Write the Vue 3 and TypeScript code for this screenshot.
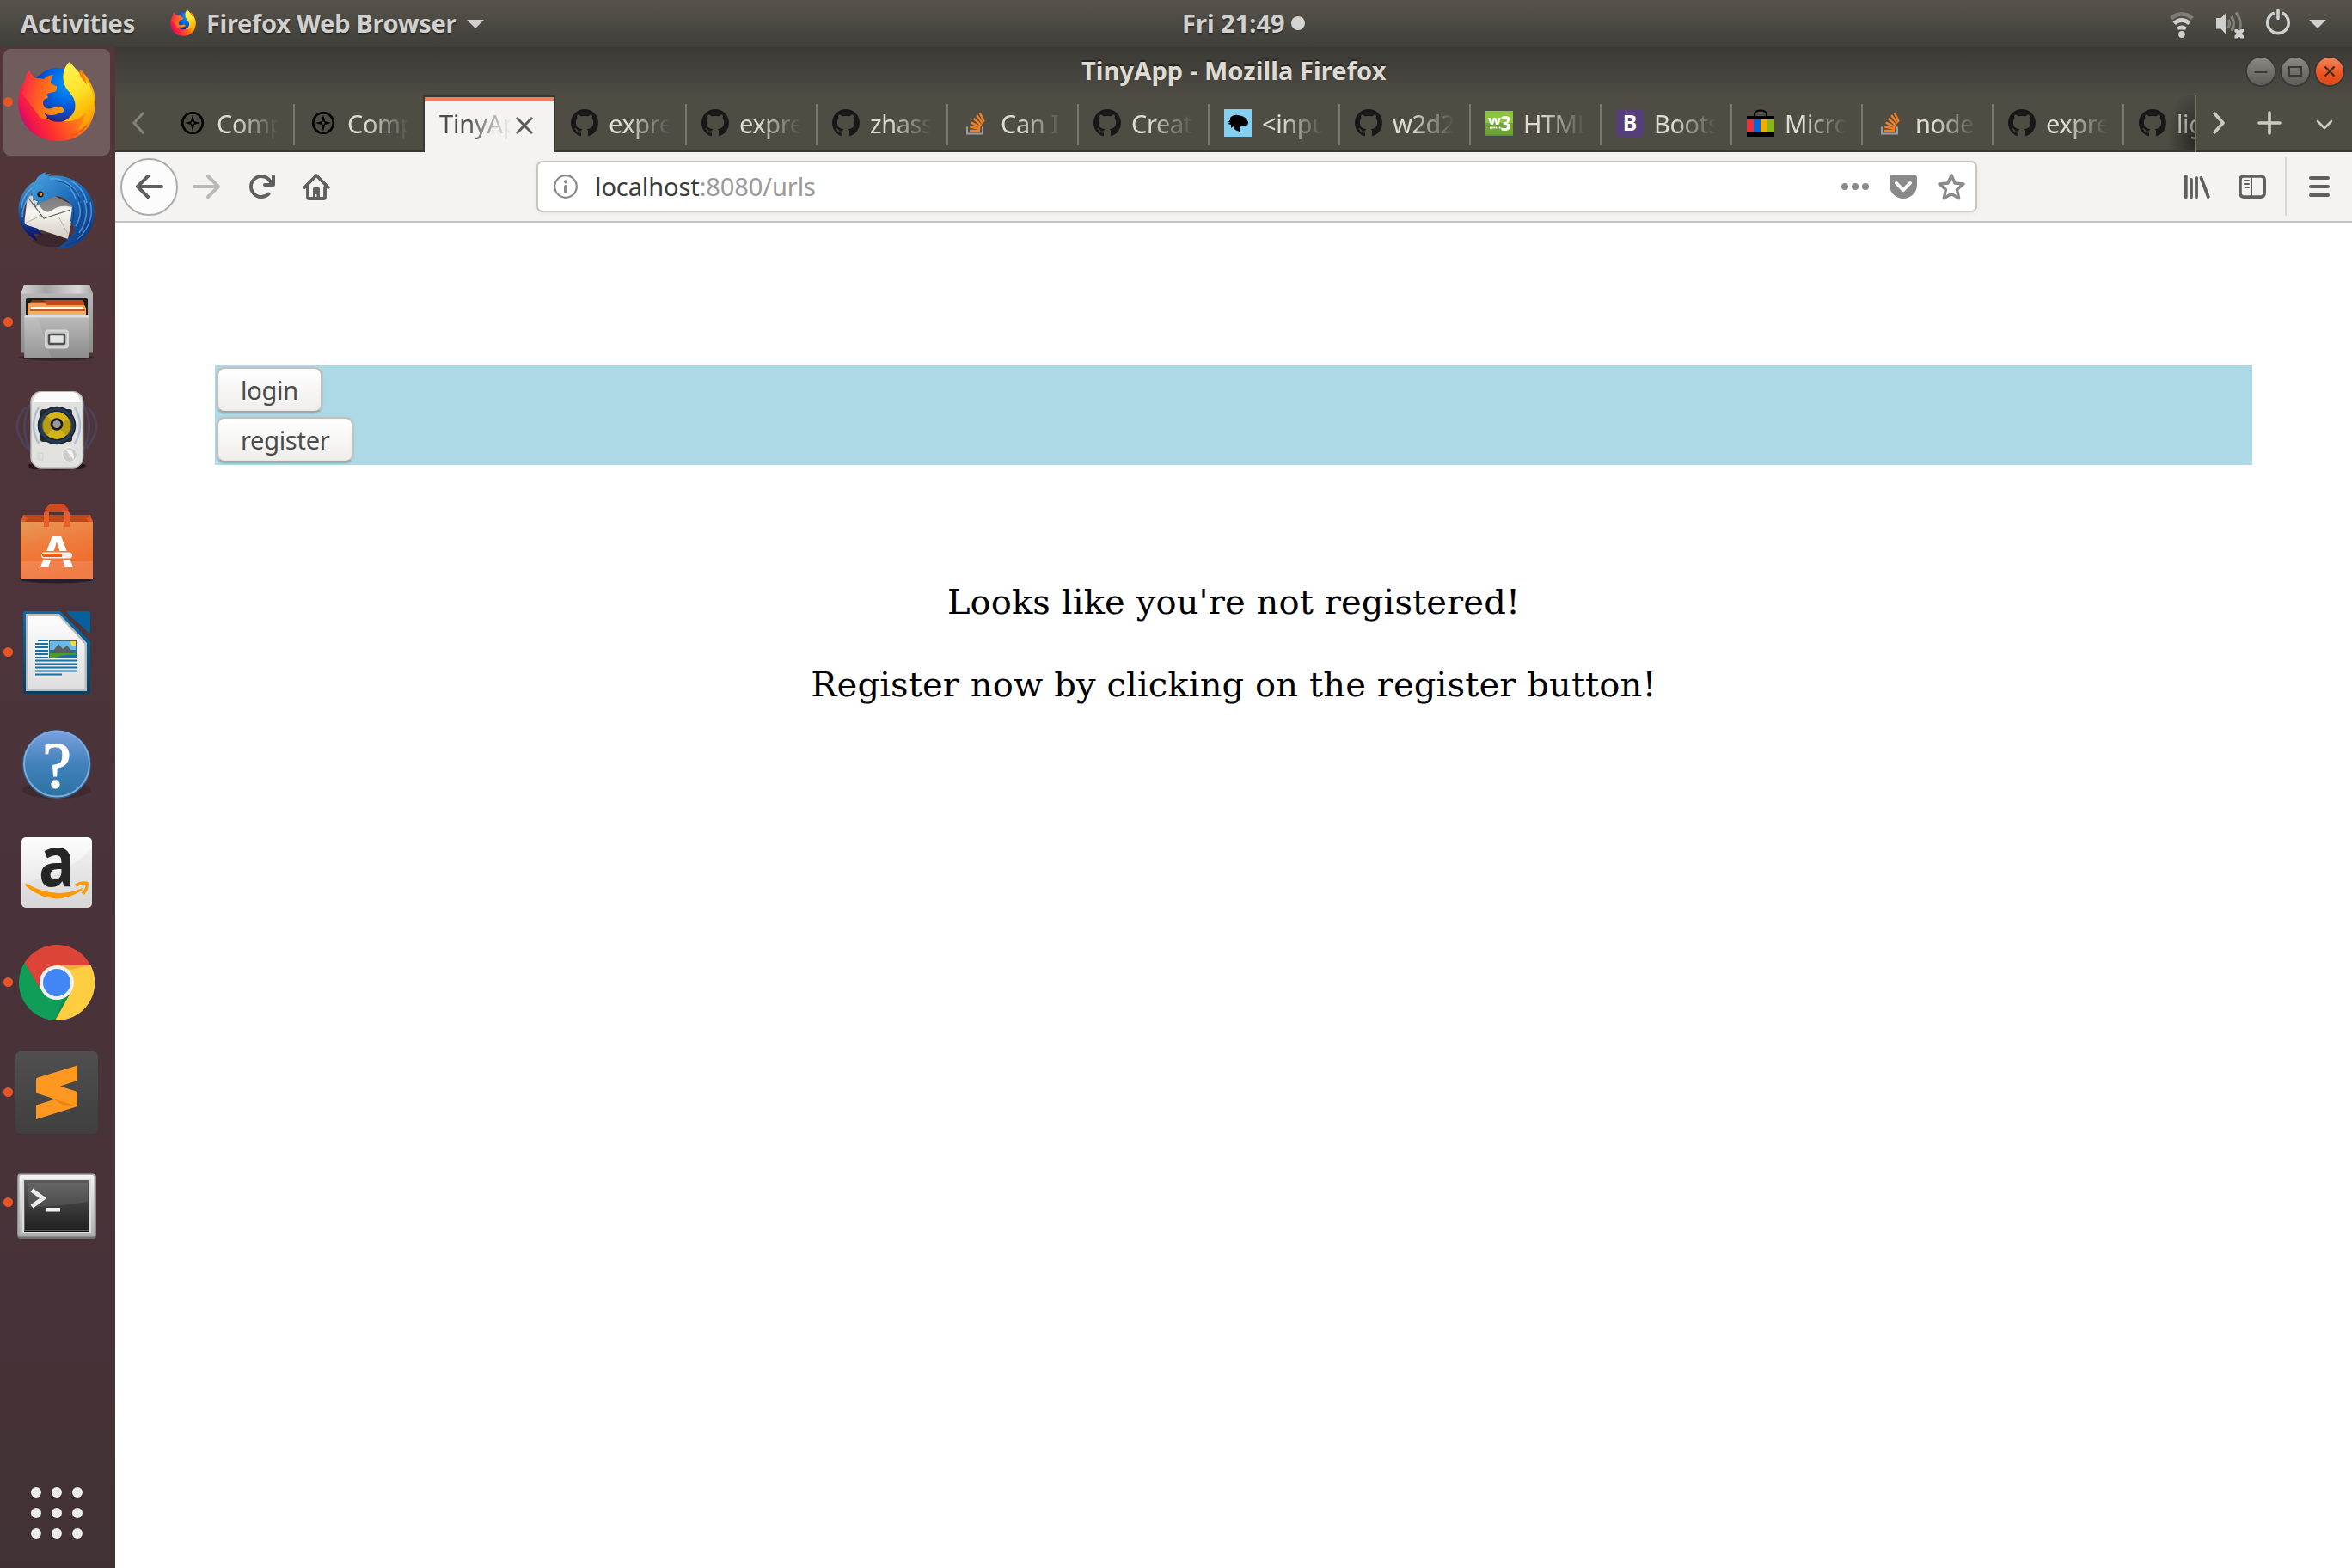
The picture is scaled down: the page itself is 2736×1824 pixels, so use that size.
<script setup lang="ts">
interface Tab {
  icon: string
  title: string
  selected?: boolean
}

interface Launcher {
  id: string
  running?: boolean
  focused?: boolean
}

const launchers: Launcher[] = [
  { id: 'firefox', running: true, focused: true },
  { id: 'thunderbird' },
  { id: 'files', running: true },
  { id: 'rhythmbox' },
  { id: 'software' },
  { id: 'writer', running: true },
  { id: 'help' },
  { id: 'amazon' },
  { id: 'chrome', running: true },
  { id: 'sublime', running: true },
  { id: 'terminal', running: true },
]

const tabs: Tab[] = [
  { icon: 'compass', title: 'Comp' },
  { icon: 'compass', title: 'Comp' },
  { icon: '', title: 'TinyAp', selected: true },
  { icon: 'github', title: 'expre' },
  { icon: 'github', title: 'expre' },
  { icon: 'github', title: 'zhass' },
  { icon: 'stack', title: 'Can I' },
  { icon: 'github', title: 'Creat' },
  { icon: 'mdn', title: '<inpu' },
  { icon: 'github', title: 'w2d2' },
  { icon: 'w3', title: 'HTML' },
  { icon: 'bootstrap', title: 'Boots' },
  { icon: 'bag', title: 'Micro' },
  { icon: 'stack', title: 'node' },
  { icon: 'github', title: 'expre' },
  { icon: 'github', title: 'lig' },
]
</script>

<template>
  <div class="screen">
    <svg class="defs" width="0" height="0">
      <defs>
        <linearGradient id="fxBody" x1="0" y1=".75" x2="1" y2=".25">
          <stop offset="0" stop-color="#b0087e" /><stop offset=".13" stop-color="#ee1450" /><stop offset=".3" stop-color="#ff302f" />
          <stop offset=".55" stop-color="#ff6a1c" /><stop offset=".8" stop-color="#ff9c0c" /><stop offset="1" stop-color="#ffb405" />
        </linearGradient>
        <linearGradient id="fxHead" x1="0" y1=".2" x2="1" y2=".5">
          <stop offset="0" stop-color="#f9244a" /><stop offset=".4" stop-color="#ff5a24" /><stop offset="1" stop-color="#ff9a08" />
        </linearGradient>
        <radialGradient id="fxGlobe" cx=".68" cy=".3" r=".75">
          <stop offset="0" stop-color="#0a96fb" /><stop offset=".5" stop-color="#0060df" /><stop offset=".8" stop-color="#1b3ca6" /><stop offset="1" stop-color="#3b1466" />
        </radialGradient>
        <linearGradient id="fxFlame" x1=".3" y1="0" x2=".6" y2="1">
          <stop offset="0" stop-color="#fff44f" /><stop offset=".45" stop-color="#ffe22b" /><stop offset=".75" stop-color="#ffbd0a" /><stop offset="1" stop-color="#ff9a05" />
        </linearGradient>
        <linearGradient id="tbWing" x1="0" y1="0" x2="1" y2="1">
          <stop offset="0" stop-color="#4ba4de" /><stop offset=".45" stop-color="#1f6fbd" /><stop offset="1" stop-color="#0b2a77" />
        </linearGradient>
        <linearGradient id="tbLow" x1="0" y1="0" x2="0" y2="1">
          <stop offset="0" stop-color="#4a94d0" /><stop offset=".55" stop-color="#1c55a0" /><stop offset="1" stop-color="#0a0a5e" />
        </linearGradient>
        <linearGradient id="paper" x1="0" y1="0" x2="0" y2="1">
          <stop offset="0" stop-color="#c9c7c0" /><stop offset=".4" stop-color="#f8f6f2" /><stop offset="1" stop-color="#d3cdc2" />
        </linearGradient>
        <linearGradient id="metal" x1="0" y1="0" x2="0" y2="1">
          <stop offset="0" stop-color="#bdbdbd" /><stop offset="1" stop-color="#8b8b8b" />
        </linearGradient>
        <linearGradient id="metalTop" x1="0" y1="0" x2="1" y2="0">
          <stop offset="0" stop-color="#d4d2d2" /><stop offset=".35" stop-color="#a5a3a3" /><stop offset=".8" stop-color="#dad8d8" /><stop offset="1" stop-color="#a9a7a7" />
        </linearGradient>
        <linearGradient id="white" x1="0" y1="0" x2="0" y2="1">
          <stop offset="0" stop-color="#fdfdfd" /><stop offset="1" stop-color="#dedede" />
        </linearGradient>
        <linearGradient id="orangeBag" x1="0" y1="0" x2=".3" y2="1">
          <stop offset="0" stop-color="#e69a58" /><stop offset=".45" stop-color="#ef7d3e" /><stop offset="1" stop-color="#ee6a2b" />
        </linearGradient>
        <linearGradient id="helpBlue" x1="0" y1="0" x2="0" y2="1">
          <stop offset="0" stop-color="#7b9fdf" /><stop offset=".5" stop-color="#4282bb" /><stop offset="1" stop-color="#2b72a2" />
        </linearGradient>
        <linearGradient id="sublimeBg" x1="0" y1="0" x2="0" y2="1">
          <stop offset="0" stop-color="#4f4f4f" /><stop offset="1" stop-color="#3e3f3e" />
        </linearGradient>
        <linearGradient id="term" x1="0" y1="0" x2="0" y2="1">
          <stop offset="0" stop-color="#5a5a5a" /><stop offset=".5" stop-color="#3c3c3c" /><stop offset="1" stop-color="#1f1f1f" />
        </linearGradient>
        <linearGradient id="termFrame" x1="0" y1="0" x2="0" y2="1">
          <stop offset="0" stop-color="#f3f3f3" /><stop offset="1" stop-color="#b0b0b0" />
        </linearGradient>
        <linearGradient id="writerBlue" x1="0" y1="0" x2="0" y2="1">
          <stop offset="0" stop-color="#0a6cab" /><stop offset="1" stop-color="#083f62" />
        </linearGradient>
      </defs>
      <symbol id="firefox-logo" viewBox="3 0 90 94">
        <circle cx="49" cy="40" r="32" fill="url(#fxGlobe)" />
        <path fill="url(#fxBody)" d="M12 21C5 31 3.300 40 3.300 49 3.300 74 24 93 48.700 93c14 0 24-4 32-12 8-7 13-22 12.300-36C92 32 86 20 75.300 9.700L70 50c0 10-6 16-14 20-12 3-24-2-25-15l2-12-16-20z" />
        <path fill="url(#fxHead)" d="M16.300 10.700C12.500 14 11 18 12 24L8 38l18 24c2 4 6 6 9 6l2-3c-2-1-3-3-3-4.500 3 2 6 2.800 9 2.500 4-.5 8-2.500 10.700-3 2-.5 3-2.500 2.300-4-2-3-5-3.500-8-3-4 1-6 3-9.500 2.500C34 55 31.500 51 32 47.500c.8-2.500 3-4.500 5.700-4.200.3-1.600-.4-3-1.700-4.300 3-2.500 8-2.500 11-4 1.200-1.500 1.400-4 1-6-2.500 0-5-2-7-4 .2-3.600 1-7 3-9.300-4.500.5-8.500 2.500-11 5.300-3-.7-6-1-9-1-3.500-2-6.700-5-7.700-9.300z" />
        <path fill="url(#fxFlame)" d="M63 .7C53 10 54 24 60 33c5 6 9 10 9.500 18C70 61 64 67 56 70c10 1 20-2 25-10-1 9-4 15-9 20 8-2 13-9 16-16 4-12 4-22 0-32C84 22 72 12 63 .7z" />
        <path fill="#ff7a10" d="M75.300 9.700c-1 3-1 5 0 8l8 10C82 21 79 14 75.300 9.700z" />
        <path fill="none" stroke="#ee5a10" stroke-width="1.500" d="M64 86c8-1 14-5 19-11M64 88l8-3" />
      </symbol>
      <symbol id="github" viewBox="0 0 16 16">
        <path fill="#181616" d="M8 0C3.580 0 0 3.580 0 8c0 3.540 2.290 6.530 5.470 7.590.4.070.55-.17.55-.38 0-.19-.01-.82-.01-1.490-2.010.37-2.530-.49-2.690-.94-.09-.23-.48-.94-.82-1.130-.28-.15-.68-.52-.01-.53.63-.01 1.080.58 1.230.82.72 1.210 1.870.87 2.330.66.070-.52.28-.87.51-1.070-1.780-.2-3.640-.89-3.640-3.950 0-.87.31-1.590.82-2.150-.08-.2-.36-1.020.08-2.120 0 0 .67-.21 2.200.82.64-.18 1.320-.27 2-.27s1.360.09 2 .27c1.530-1.040 2.200-.82 2.200-.82.44 1.100.16 1.920.08 2.120.51.56.82 1.270.82 2.150 0 3.070-1.870 3.750-3.650 3.950.29.25.54.73.54 1.480 0 1.070-.01 1.930-.01 2.200 0 .21.15.46.55.38A8.010 8.010 0 0 0 16 8c0-4.420-3.580-8-8-8z" />
      </symbol>
      <symbol id="compass" viewBox="0 0 32 32">
        <circle cx="16" cy="16" r="11.800" fill="none" stroke="#000" stroke-width="2.600" />
        <path fill="#000" fill-rule="evenodd" d="M16 6.500l2 7.500 7 2-7 2-2 7.500-2-7.500-7-2 7-2zM16 14l-2 2 2 2 2-2z" />
      </symbol>
      <symbol id="stack" viewBox="0 0 32 32">
        <path fill="none" stroke="#9a9ea3" stroke-width="2" d="M5 20.500v8h18v-8" />
        <path fill="none" stroke="#f48024" stroke-width="2.400" d="M8 25h12M8.300 20.500l12 2.200M9.600 15.600l11 5M12.700 11l9 7.800M16.200 7l6.800 9.500M19.800 4.300l5 10.500" />
      </symbol>
      <symbol id="mdn" viewBox="0 0 32 32">
        <path fill="#83d0f2" d="M0 0h32v32H0z" />
        <path d="M5 15l2.500-3.500L7 10C10 7 14 6 18 7.500 22 8 25.500 9.500 28 15c0 4-2 4.500-6 4-3 0-4 2-4 7-4-1-7-3-7.500-6L8 22v-4l-3.500-1L7 15.500z" />
      </symbol>
      <symbol id="w3" viewBox="0 0 32 32">
        <path fill="#8bc43f" d="M0 2h32v14H0z" /><path fill="#6fa633" d="M0 16h32v14.500H0z" /><path fill="#5e9130" d="M0 29.500h32V31H0z" />
        <path fill="none" stroke="#fff" stroke-width="2" stroke-dasharray="1.500 .7" d="M5 21.500h13" />
        <text x="3" y="18" font-size="14" textLength="15" lengthAdjust="spacingAndGlyphs" class="logo-text" fill="#fff">w</text>
        <text x="17.500" y="24.500" font-size="24" textLength="12" lengthAdjust="spacingAndGlyphs" class="logo-text" fill="#fff">3</text>
      </symbol>
      <symbol id="bootstrap" viewBox="0 0 32 32">
        <rect width="32" height="32" rx="5.500" fill="#563d7c" />
        <text x="16" y="25" font-size="25" text-anchor="middle" class="logo-text" fill="#fff">B</text>
      </symbol>
      <symbol id="bag" viewBox="0 0 32 32">
        <path fill="none" stroke="#000" stroke-width="2" d="M9 8V6c0-6 14-6 14 0v2" />
        <path d="M0 8h32v24H0z" /><path fill="#e8323c" d="M0 12h8v14H0z" /><path fill="#0b61d6" d="M8 12h8v14H8z" />
        <path fill="#f5ac00" d="M16 12h8v14h-8z" /><path fill="#86b816" d="M24 12h8v14h-8z" />
      </symbol>
    </svg>

    <header class="panel">
      <span class="activities">Activities</span>
      <svg class="panel-fx" width="30" height="31"><use href="#firefox-logo" width="30" height="31" /></svg>
      <span class="appname">Firefox Web Browser</span>
      <svg class="caret" width="20" height="10" viewBox="0 0 20 10"><path d="M0 0h20L10 10z" fill="#d0d0ce" /></svg>
      <span class="clock">Fri 21:49</span>
      <i class="notice"></i>
      <div class="indicators">
        <svg width="32" height="32" viewBox="0 0 32 32">
          <path d="M2 11.500a19.500 19.500 0 0 1 28 0l-3.200 3.300a15 15 0 0 0-21.600 0z" transform="translate(0 -3.500)" fill="#7d7b75" />
          <path d="M5.500 15a14.500 14.500 0 0 1 21 0l-3.400 3.500a9.800 9.800 0 0 0-14.200 0z" transform="translate(0 -1.500)" fill="#d0d0ce" />
          <path d="M10.500 19.600a8 8 0 0 1 11 0l-1 2.900h-9z" fill="#d0d0ce" /><circle cx="16" cy="28" r="3.900" fill="#d0d0ce" />
        </svg>
        <svg width="34" height="34" viewBox="0 0 34 34">
          <path d="M1 10h5.500L12.500 4v25l-6-6.500H1z" fill="#d0d0ce" />
          <path d="M15 12q3 4.500 0 9.500M18.500 8q5.500 8 .5 17M24 3.500Q31.500 13 28 24" fill="none" stroke="#807e78" stroke-width="3.500" />
          <path d="M22.500 23h3l2 2.500 2-2.500H33v3L30.500 28l2.500 2.500v3h-3.500l-2-2.500-2 2.500h-3v-3L25 28l-2.500-2z" fill="#d0d0ce" />
        </svg>
        <svg width="32" height="32" viewBox="0 0 32 32" fill="none" stroke="#d0d0ce" stroke-width="3.600" stroke-linecap="round"><path d="M10.200 6.700a12.200 12.200 0 1 0 11.600 0M16 3v9.500" /></svg>
        <svg class="caret2" width="20" height="10" viewBox="0 0 20 10"><path d="M0 0h20L10 10z" fill="#d0d0ce" /></svg>
      </div>
    </header>

    <div class="desktop">
      <aside class="dock">
        <div v-for="l in launchers" :key="l.id" class="launcher">
          <div class="tile" :class="{ focused: l.focused }">
            <svg v-if="l.id === 'firefox'" width="96" height="96"><use href="#firefox-logo" x="3" y="0" width="90" height="94" /></svg>

            <svg v-else-if="l.id === 'thunderbird'" width="96" height="96" viewBox="0 0 96 96">
              <ellipse cx="46" cy="80" rx="26" ry="8" fill="#2c1c20" opacity=".55" />
              <path fill="url(#paper)" d="M14 29l-4 33 51 17 8-38-29-15z" />
              <path fill="none" stroke="#5e5c57" stroke-width="1.100" d="M14 30l19 25 31-10" /><path fill="none" stroke="#b9b4aa" d="M49 51l12 22M30 52L12 60" />
              <path fill="#3b3938" opacity=".55" d="M24 38c6 2 8 12 16 9 6-3 10-9 26-5V30L40 22z" />
              <path fill="url(#tbLow)" d="M22 12C8 20 1 38 4 52c1 12 8 22 21 29l-4-9 11 3-6-8-15-5C8 48 10 36 20 25z" />
              <path fill="url(#tbWing)" d="M21 16C24 8 28 3 36 1l-2 3 7-1-3 3c24-5 52 12 54 40 1 24-18 46-44 44 8-5 12-8 12-11 6-4 8-7 9-12l-5-9 2-17c-8-11-18-14-24-10-6 5-9 3-16 8l-4 2-1-8c-3-7-2-13 0-17z" />
              <path fill="none" stroke="#6fbdee" stroke-width="1.600" opacity=".6" d="M40 9c14-2 28 7 34 21M52 13c10 2 15 10 18 19M64 11c10 6 17 15 19 26M73 36c4 10 2 20-3 28M80 34c5 13 2 26-6 38M87 36c4 17-2 32-16 44M7 43c1-12 6-18 13-24M8 54c0-12 4-20 10-27" />
              <path fill="none" stroke="#0c3c83" stroke-width="1.400" opacity=".7" d="M46 11c13 2 25 9 29 24M67 42c2 9 0 16-3 20M76 38c4 12 0 22-6 32M84 40c4 14-1 28-14 40M88 60c-4 12-14 22-30 27" />
              <circle cx="29" cy="27" r="3.600" fill="#1b1016" /><circle cx="29.500" cy="27" r="1.900" fill="#f6921e" />
              <path d="M20.500 33l6 2-3 7z" fill="#cfe0ef" stroke="#333" stroke-width=".6" />
            </svg>

            <svg v-else-if="l.id === 'files'" width="96" height="96" viewBox="0 0 96 96">
              <ellipse cx="48" cy="89" rx="44" ry="3.500" fill="#2a1b1e" opacity=".7" />
              <path d="M10 4.500h76l4 10v69H6v-69z" fill="url(#metal)" /><path d="M10.500 4h75l4 10.500h-83z" fill="url(#metalTop)" />
              <path d="M12 21.500q0-1.500 2-1.500h68q2 0 2 1.500V41H12z" fill="#1d1b1a" />
              <path d="M20 22h58l2 3v12H16V26z" fill="#c14a1a" /><path d="M20 22h12l4 2h-18z" fill="#7e3410" />
              <path d="M14 26h20l3 2h43l2 3v10H14z" fill="#eaa25a" /><path d="M18 30h60v2.500H18z" fill="#fff" />
              <path d="M17 33h64v2H17z" fill="#c8571f" /><path d="M14 35h68v6H14z" fill="#f0ae66" />
              <path d="M10 42l1.500-3h73l1.500 3v47q0 1-1 1H11q-1 0-1-1z" fill="url(#metal)" /><path d="M10 42.500l2-3.500h72l2 3.500z" fill="#dedede" />
              <path d="M11 43l15 0 16 47H11z" fill="#fff" opacity=".1" />
              <rect x="35" y="57.500" width="26" height="20" rx="3" fill="#c9c9c9" stroke="#d8d8d8" stroke-width="2" />
              <rect x="39" y="62" width="18" height="11" rx="1" fill="#e5e5e5" stroke="#4d504f" stroke-width="2.500" />
            </svg>

            <svg v-else-if="l.id === 'rhythmbox'" width="96" height="96" viewBox="0 3 96 96">
              <g fill="none" stroke="#4b5884" stroke-width="3" opacity=".4"><path d="M12 22Q-9 43 14 70M19 15Q2 43 19 76M84 22Q105 43 82 70M77 15Q94 43 77 76" /></g>
              <ellipse cx="48" cy="90" rx="34" ry="5" fill="#1c1013" opacity=".8" />
              <rect x="18" y="3.500" width="60.500" height="88.500" rx="12" fill="#e1e1de" stroke="#b5b5b1" stroke-width="1.500" />
              <path d="M24 7q2-3 7-3h34q5 0 7 3l4 9H20z" fill="#fafafa" />
              <rect x="29" y="24" width="37" height="38" rx="3" fill="#2a2d2e" />
              <circle cx="48" cy="43" r="22.300" fill="#1a2433" /><circle cx="48" cy="43" r="19" fill="none" stroke="#263b59" stroke-width="3" />
              <circle cx="48" cy="43" r="16" fill="#d2b51c" /><path d="M48 43L36 31a16 16 0 0 0 0 24zM48 43l12 12a16 16 0 0 0 3-20z" fill="#a48e12" opacity=".6" />
              <circle cx="48" cy="41.500" r="7.300" fill="#191919" /><circle cx="48" cy="41.500" r="4.600" fill="#9a9a9a" />
              <circle cx="63" cy="77" r="8.500" fill="#ccc" stroke="#f4f4f4" stroke-width="1" /><path d="M58 71q10-2 10 12z" fill="#f4f4f4" />
              <path d="M26 75h6v8h-6zM28 77v5" fill="none" stroke="#cfcfcc" />
              <g fill="none" stroke="#8fa9d4" stroke-width="2.500" opacity=".6"><path d="M27 22q-12 21 0 42M69 22q12 21 0 42" /></g>
            </svg>

            <svg v-else-if="l.id === 'software'" width="96" height="96" viewBox="0 -2 96 96">
              <path d="M4 87h88l-4 4q-40 5-80 0z" fill="#22161a" opacity=".8" />
              <path d="M9 14h78v4l3 3v4H6v-4l3-3z" fill="#bd4617" /><path d="M9 14l5 4-3 4-5 0zM87 14l-5 4 3 4h5z" fill="#dd5a24" />
              <path d="M6 22h84v66H6z" fill="url(#orangeBag)" /><path d="M6 68h84v20H6z" fill="#fff" opacity=".13" />
              <path d="M33 28V12l7-11h16l7 11v16h-6V11H39v17z" fill="#ea5d27" /><path d="M34 8l6-7h16l6 7-5 3H39z" fill="#d24a1b" />
              <text x="48" y="74.500" text-anchor="middle" font-size="50" textLength="38" lengthAdjust="spacingAndGlyphs" class="logo-text" fill="#fff">A</text>
              <path d="M28 56h40v10H28z" fill="#ef7637" />
              <rect x="30" y="57.500" width="36" height="7" rx="3.500" fill="#f2f0ee" /><path d="M33 59h21v4H33a2 2 0 0 1 0-4z" fill="#f05a10" />
            </svg>

            <svg v-else-if="l.id === 'writer'" width="96" height="96" viewBox="0 0 96 96">
              <path d="M11 0h41l35 35v59q0 2-2 2H11q-2 0-2-2V2q0-2 2-2z" fill="url(#writerBlue)" />
              <path d="M12 3h39l32 34v56H12z" fill="#bcbcbc" /><path d="M14.500 5.500H50L80.500 38v52.500h-66z" fill="url(#white)" />
              <path d="M61 0h24q2 0 2 2v22q-1 2-3 0L61 3q-1-2 0-3z" fill="#075f9b" />
              <path d="M26 34h12M23 38h15M23 42h15M23 46h15M23 50h15M23 54h15M23 57.500h48M23 61.500h48M23 65.500h48M23 69.500h48M23 73.500h31" stroke="#1a70a5" stroke-width="2" />
              <path d="M39 34h32v21H39z" fill="#1e6ea8" /><path d="M40 35h30v10H40z" fill="#6ab9e6" /><path d="M64 35h6v6q-6 0-6-6z" fill="#ffd63c" />
              <path d="M41 50l9-12 5 6 5-4 9 10z" fill="#59605f" /><path d="M40 49h30v2q-14-1-24 3h-6z" fill="#4e9a2d" />
            </svg>

            <svg v-else-if="l.id === 'help'" width="96" height="96" viewBox="0 -2 96 96">
              <ellipse cx="48" cy="78" rx="40" ry="10" fill="#33222a" opacity=".5" />
              <circle cx="48" cy="48" r="40" fill="#2a6291" /><circle cx="48" cy="47.500" r="38" fill="url(#helpBlue)" stroke="#7fabd8" stroke-width="2" />
              <text x="48" y="75" text-anchor="middle" font-size="76" class="serif-mark" fill="#fff" stroke="#fff" stroke-width="1.200">?</text>
            </svg>

            <svg v-else-if="l.id === 'amazon'" width="96" height="96" viewBox="0 0 96 96">
              <rect x="7" y="7" width="82" height="82" rx="5" fill="url(#white)" /><path d="M8 60Q60 50 89 20v64q0 5-5 5H12q-4 0-4-5z" fill="#000" opacity=".03" />
              <text x="48" y="64" text-anchor="middle" font-size="80" textLength="42" lengthAdjust="spacingAndGlyphs" class="logo-text" fill="#262626">a</text>
              <path d="M13 61q33 19 65 5l-1 3Q44 90 12 64q-1-3 1-3z" fill="#ff9900" />
              <path d="M70 63q7-4 13-2.500 1.500 6-5 12.500" fill="none" stroke="#ff9900" stroke-width="3.500" />
            </svg>

            <svg v-else-if="l.id === 'chrome'" width="96" height="96" viewBox="0 0 96 96">
              <path d="M48 48L10.800 24.500A44 44 0 0 1 87.500 28.500L62 36z" fill="#db4437" />
              <path d="M48 48L10.800 24.500A44 44 0 0 0 46 92l18-30z" fill="#0f9d58" />
              <path d="M48 28h39.500A44 44 0 0 1 46 92l18-32z" fill="#ffcd40" />
              <path d="M10.800 24.500L28 54l20-6-20-20z" fill="#c53a2f" opacity=".85" /><path d="M10.800 24.500Q26 10 48 8L66 28H48L28 54z" fill="#db4437" />
              <path d="M50 28h37L64 33z" fill="#dba52a" opacity=".6" /><path d="M46 92l16-29-8 5z" fill="#0b7f46" opacity=".5" />
              <circle cx="48" cy="48" r="20" fill="#f1f1f1" /><circle cx="48" cy="48" r="16" fill="#4285f4" />
            </svg>

            <svg v-else-if="l.id === 'sublime'" width="96" height="96" viewBox="0 0 96 96">
              <rect width="96" height="96" rx="6" fill="url(#sublimeBg)" />
              <path d="M24 62.500l48-15V64L24 79z" fill="#ff9820" /><path d="M44 55l28 5v4l-18-2z" fill="#e6810f" opacity=".8" />
              <path d="M24 32.500Q24 31 26 30.500L72 16.500V34L52 40.500 72 47v17L24 48.500z" fill="#ff9820" />
            </svg>

            <svg v-else width="96" height="96" viewBox="0 -4 96 96">
              <rect x="2" y="11" width="92" height="75" rx="4" fill="#6f716f" /><rect x="2.500" y="10.500" width="91" height="73" rx="3" fill="#a9aaa9" />
              <rect x="4.500" y="12" width="87" height="70" rx="2" fill="url(#termFrame)" />
              <rect x="8" y="16" width="80" height="63" fill="#dedede" /><rect x="10" y="18" width="76" height="60" fill="#0c0c0c" />
              <rect x="10.500" y="18.500" width="75" height="58" fill="url(#term)" stroke="#5e625f" stroke-width="1" /><path d="M14 21h70v22Q50 49 14 49z" fill="#fff" opacity=".09" />
              <path d="M19 29.500l13 9.500-13 9.500" fill="none" stroke="#ececec" stroke-width="5" /><path d="M36 50h16v4.500H36z" fill="#f2f2f2" />
            </svg>
          </div>
          <i v-if="l.running" class="running"></i>
        </div>
        <svg class="apps" width="60" height="60" viewBox="0 0 60 60" fill="#eeeeec">
          <template v-for="r in 3" :key="r"><circle v-for="c in 3" :key="c" :cx="c * 24 - 18" :cy="r * 24 - 18" r="6" /></template>
        </svg>
      </aside>

      <main class="window">
        <div class="titlebar">
          <span class="wtitle">TinyApp - Mozilla Firefox</span>
          <div class="winbtns">
            <svg width="32" height="32" viewBox="0 0 32 32" class="wb"><path d="M8.500 17h15" stroke="#3a3935" stroke-width="2" /></svg>
            <svg width="32" height="32" viewBox="0 0 32 32" class="wb"><path d="M9 11h14v10H9z" fill="none" stroke="#3a3935" stroke-width="2" /></svg>
            <svg width="32" height="32" viewBox="0 0 32 32" class="wb close"><path d="M10.500 10.500l11 11m0-11l-11 11" stroke="#4a2a18" stroke-width="2.400" /></svg>
          </div>
        </div>

        <div class="tabstrip">
          <svg class="scroll-left" width="16" height="26" viewBox="0 0 16 26"><path d="M13 2L3 13l10 11" fill="none" stroke="#85827a" stroke-width="3.200" stroke-linecap="round" stroke-linejoin="round" /></svg>
          <div class="tabs">
            <div v-for="(t, i) in tabs" :key="i" class="tab" :class="{ selected: t.selected, plain: i === 0 || i === 3 }">
              <svg v-if="t.icon" class="fav" width="32" height="32"><use :href="'#' + t.icon" width="32" height="32" /></svg>
              <span class="label">{{ t.title }}</span>
              <svg v-if="t.selected" class="x" width="20" height="20" viewBox="0 0 20 20"><path d="M1.800 1.800l16.400 16.400m0-16.400L1.800 18.200" stroke="#5b5a58" stroke-width="2.800" stroke-linecap="round" /></svg>
            </div>
          </div>
          <div class="tab-tools">
            <svg width="16" height="26" viewBox="0 0 16 26"><path d="M3 2l10 11L3 24" fill="none" stroke="#cfcac1" stroke-width="3.600" stroke-linecap="round" stroke-linejoin="round" /></svg>
            <svg class="plus" width="28" height="28" viewBox="0 0 28 28"><path d="M14 2v24M2 14h24" stroke="#cfcac1" stroke-width="3.600" stroke-linecap="round" /></svg>
            <svg class="all-tabs" width="20" height="13" viewBox="0 0 20 13"><path d="M2 2l8 8 8-8" fill="none" stroke="#cfcac1" stroke-width="2.600" stroke-linecap="round" stroke-linejoin="round" /></svg>
          </div>
        </div>

        <div class="navbar">
          <div class="back"><svg width="32" height="32" viewBox="0 0 16 16"><path fill="#5f5f5f" d="M15 7H3.414l4.293-4.293a1 1 0 0 0-1.414-1.414l-6 6a1 1 0 0 0 0 1.414l6 6a1 1 0 0 0 1.414-1.414L3.414 9H15a1 1 0 0 0 0-2z" /></svg></div>
          <svg class="fwd" width="32" height="32" viewBox="0 0 16 16"><path fill="#bab9b8" d="M1 7h11.586L8.293 2.707a1 1 0 0 1 1.414-1.414l6 6a1 1 0 0 1 0 1.414l-6 6a1 1 0 0 1-1.414-1.414L12.586 9H1a1 1 0 0 1 0-2z" /></svg>
          <svg class="reload" width="32" height="32" viewBox="0 0 16 16"><path fill="#5f5f5f" d="M15 1a1 1 0 0 0-1 1v2.418A6.995 6.995 0 1 0 8 15a6.954 6.954 0 0 0 4.950-2.050 1 1 0 0 0-1.414-1.414A5.019 5.019 0 1 1 12.549 6H10a1 1 0 0 0 0 2h5a1 1 0 0 0 1-1V2a1 1 0 0 0-1-1z" /></svg>
          <svg class="home" width="32" height="32" viewBox="0 0 32 32">
            <path fill="none" stroke="#5f5f5f" stroke-width="3.800" stroke-linecap="round" stroke-linejoin="round" d="M2.200 17L16 3l13.800 14M6 17v11.500q0 1.500 1.500 1.500h17q1.500 0 1.500-1.500V17" />
            <path fill="#5f5f5f" d="M12 29V18.500q0-1.500 1.500-1.500h5q1.500 0 1.500 1.500V29h-3.600v-4h-2v4z" />
          </svg>
          <div class="url">
            <svg width="28" height="28" viewBox="0 0 28 28"><circle cx="14" cy="14" r="12.800" fill="none" stroke="#8a8a8a" stroke-width="2.200" /><circle cx="14" cy="8.300" r="2.100" fill="#8a8a8a" /><path d="M14 14v6" stroke="#8a8a8a" stroke-width="4" stroke-linecap="round" /></svg>
            <span class="address">localhost<em>:8080/urls</em></span>
            <svg class="dots" width="32" height="8" viewBox="0 0 32 8" fill="#8a8a8a"><circle cx="4" cy="4" r="4" /><circle cx="16" cy="4" r="4" /><circle cx="28" cy="4" r="4" /></svg>
            <svg class="pocket" width="32" height="32" viewBox="0 0 16 16"><path fill="#8a8a8a" d="M8 15a8 8 0 0 1-8-8V3a2 2 0 0 1 2-2h12a2 2 0 0 1 2 2v4a8 8 0 0 1-8 8zm3.985-10.032a.99.99 0 0 0-.725.319L7.978 8.570 4.755 5.336A.984.984 0 0 0 4 4.968a1 1 0 0 0-.714 1.700l-.016.011 3.293 3.306.707.707a1 1 0 0 0 1.414 0l.707-.707L12.700 6.679a1 1 0 0 0-.715-1.711z" /></svg>
            <svg class="star" width="32" height="32" viewBox="0 0 32 32"><path fill="none" stroke="#8a8a8a" stroke-width="3.400" stroke-linejoin="round" d="M16 2.800l4 9.200 10 1-7.500 6.500 2.200 10.200L16 24.500l-8.700 5.200 2.200-10.200L2 13l10-1z" /></svg>
          </div>
          <div class="tools">
            <svg width="32" height="32" viewBox="0 0 32 32"><path d="M2.800 3.800v24.400M9 7.800v20.400M15 5.800v22.400M20.500 5.800L28.800 28" stroke="#5f5f5f" stroke-width="3.800" stroke-linecap="round" /></svg>
            <svg width="32" height="32" viewBox="0 0 32 32"><rect x="1.900" y="3.900" width="28.200" height="24.200" rx="4" fill="none" stroke="#5f5f5f" stroke-width="3.800" /><path d="M15 4v24" stroke="#5f5f5f" stroke-width="2" /><path d="M7 9h5M7 13h5M9 17h3" stroke="#5f5f5f" stroke-width="2" stroke-linecap="round" /></svg>
            <i class="sep"></i>
            <svg width="28" height="28" viewBox="0 0 28 28"><path d="M4 4h20M4 14h20M4 24h20" stroke="#5f5f5f" stroke-width="4" stroke-linecap="round" /></svg>
          </div>
        </div>

        <section class="page">
          <div class="links">
            <button type="button">login</button>
            <button type="button">register</button>
          </div>
          <p>Looks like you're not registered!</p>
          <p>Register now by clicking on the register button!</p>
        </section>
      </main>
    </div>
  </div>
</template>

<style>
body { margin: 0; overflow: hidden; }
</style>

<style scoped>
.screen { width: 2736px; height: 1824px; overflow: hidden; display: flex; flex-direction: column; background: #fff; font: 29px/40px "Noto Sans", sans-serif; box-sizing: border-box; }
.defs { position: absolute; }
svg { display: block; flex: none; }
.logo-text { font-family: "Noto Sans", sans-serif; font-weight: 700; }
.serif-mark { font-family: "Liberation Serif", serif; }

.panel { height: 55px; flex: none; display: flex; align-items: center; background: linear-gradient(#58544c, #3f3e39); color: #d0d0ce; font-weight: 700; text-shadow: 0 2px 2px rgba(0, 0, 0, .45); white-space: nowrap; }
.panel span { margin-top: -2px; }
.activities { width: 172px; margin-left: 24px; letter-spacing: -.15px; }
.panel-fx { margin: -2px 12px 0 2px; }
.appname { width: 303px; letter-spacing: -.3px; }
.panel .clock { margin-left: 812px; width: 127px; }
.notice { width: 16px; height: 16px; border-radius: 50%; background: #d4d4d2; margin-top: -1px; }
.indicators { margin-left: auto; display: flex; align-items: center; padding-right: 30px; }
.indicators svg { margin-right: 23px; }
.indicators svg:nth-child(3) { margin-right: 20px; margin-top: -5px; }
.indicators .caret2 { margin-right: 0; }

.desktop { flex: 1; display: flex; min-height: 0; }
.dock { width: 134px; flex: none; display: flex; flex-direction: column; background: linear-gradient(#523639, #4a333a 50%, #463238 85%, #403234); }
.launcher { height: 128px; display: flex; align-items: center; justify-content: center; position: relative; padding-right: 2px; }
.tile { width: 124px; height: 124px; border-radius: 8px; display: flex; align-items: center; justify-content: center; }
.tile.focused { background: #705b5d; }
.running { position: absolute; left: 4px; top: 58px; width: 11px; height: 11px; border-radius: 50%; background: #e95420; }
.apps { margin: auto 0 34px 36px; }

.window { flex: 1; display: flex; flex-direction: column; min-width: 0; }
.titlebar { height: 56px; flex: none; display: flex; align-items: center; background: linear-gradient(#3a3935, #3e3d38 20%, #4d4b44); color: #dfdbd2; font-weight: 700; text-shadow: 0 -2px 1px rgba(0, 0, 0, .45); }
.wtitle { margin: -3px 0 0 1124px; white-space: nowrap; letter-spacing: .1px; }
.winbtns { margin-left: auto; display: flex; gap: 8px; padding-right: 10px; }
.wb { border-radius: 50%; background: linear-gradient(#8b8983, #6b6963 70%, #605e58); box-shadow: 0 0 0 2px #3a3935; }
.wb.close { background: linear-gradient(#f4845e, #e95420 60%, #e0491a); }

.tabstrip { height: 66px; flex: none; display: flex; background: #4f4c44; box-shadow: inset 0 -2px #3a3834; }
.scroll-left { margin: 19px 20px 0 19px; }
.tabs { flex: 1; min-width: 0; display: flex; overflow: hidden; position: relative; }
.tabs::after { content: ""; position: absolute; right: 0; top: 0; width: 32px; height: 64px; background: radial-gradient(ellipse 32px 60px at 100% 80%, rgba(0, 0, 0, .45), transparent); }
.tab { width: 152px; height: 64px; flex: none; box-sizing: border-box; display: flex; align-items: center; padding-left: 19px; color: #dfdbd2; background: linear-gradient(#7b7870, #7b7870) 0 10px / 2px 48px no-repeat; }
.tab.plain { background: none; }
.tab.selected { position: relative; height: 66px; margin: 0 -1px; width: 154px; background: #f4f3f1; border: solid #3a3834; border-width: 2px 2px 0; box-shadow: inset 0 4px #f38055; color: #4c4c4c; padding-left: 17px; z-index: 1; }
.fav { margin-right: 12px; }
.label { width: 70px; margin-top: 2px; letter-spacing: -.4px; overflow: hidden; white-space: nowrap; -webkit-mask-image: linear-gradient(90deg, #000 22px, transparent 72px); mask-image: linear-gradient(90deg, #000 22px, transparent 72px); }
.selected .label { width: 82px; margin-top: -2px; letter-spacing: -.2px; -webkit-mask-image: linear-gradient(90deg, #000 32px, transparent 84px); mask-image: linear-gradient(90deg, #000 32px, transparent 84px); }
.x { margin: 1px 0 0 7px; }
.tab-tools { width: 183px; flex: none; box-sizing: border-box; display: flex; align-items: center; height: 66px; border-left: 2px solid #76736b; padding: 0 0 2px 18px; }
.plus { margin-left: 37px; }
.all-tabs { margin-left: 40px; margin-top: 4px; }

.navbar { height: 82px; flex: none; box-sizing: border-box; display: flex; align-items: center; border-bottom: 2px solid #c6c3c0; background: #f4f3f1; }
.back { width: 67px; height: 67px; box-sizing: border-box; margin-left: 6px; border: 2px solid #acacab; border-radius: 50%; background: #fcfcfc; display: flex; align-items: center; justify-content: center; }
.fwd { margin-left: 17px; }
.reload { margin-left: 32px; }
.home { margin-left: 32px; }
.url { width: 1676px; height: 60px; box-sizing: border-box; margin-left: 240px; border: 2px solid #c8c5c1; border-radius: 7px; background: #fff; box-shadow: 0 1px 6px rgba(0, 0, 0, .06); display: flex; align-items: center; padding-left: 18px; }
.address { margin-left: 20px; color: #3c3c3c; letter-spacing: -.1px; margin-top: -1px; }
.address em { font-style: normal; color: #9a9a9a; }
.dots { margin-left: auto; }
.pocket { margin-left: 24px; }
.star { margin: 0 12px 0 24px; }
.tools { margin-left: auto; display: flex; align-items: center; padding-right: 24px; }
.tools svg + svg { margin-left: 32px; }
.sep { width: 2px; height: 68px; margin: 0 24px 0 22px; background: #dad8d5; }

.page { flex: 1; padding: 166px 116px 0; text-align: center; font: 40px/47px "DejaVu Serif", serif; letter-spacing: .13px; color: #000; }
.links { height: 116px; box-sizing: border-box; padding: 2px; margin-bottom: 136px; display: flex; flex-direction: column; align-items: flex-start; gap: 5px; background: #add8e6; }
.links button { height: 53px; box-sizing: border-box; border: 2px solid #c3bfbb; border-bottom-color: #a9a5a2; border-radius: 9px; background: linear-gradient(#fff, #efeeec); box-shadow: 0 1px 2px rgba(0, 0, 0, .2), inset 0 0 3px rgba(0, 0, 0, .06); padding: 1px 26px 1px 26px; font: 29px/46px "Noto Sans", sans-serif; letter-spacing: -.3px; color: #4c4c4c; }
.page p { margin: 0 0 49px; }
</style>
